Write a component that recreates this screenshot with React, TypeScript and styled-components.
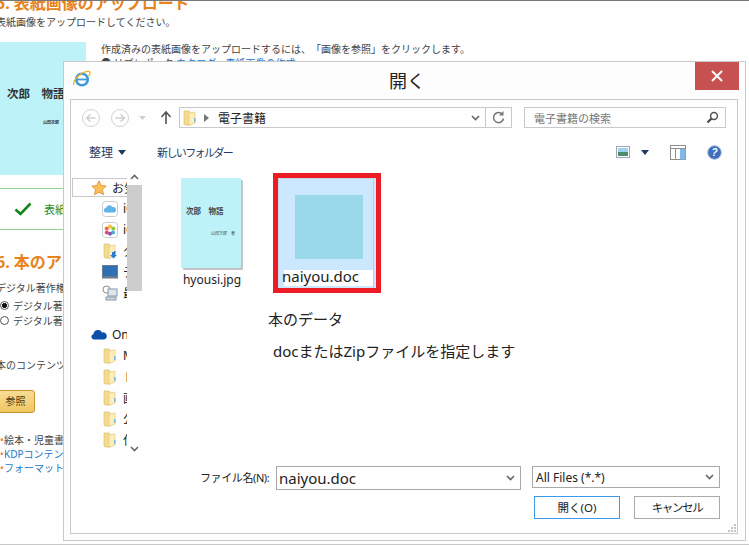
import React from "react";
import styled, { createGlobalStyle } from "styled-components";

const Global = createGlobalStyle`
  html, body { margin: 0; padding: 0; background: #fff; }
  body {
    font-family: "Noto Sans", "Noto Sans CJK JP", sans-serif;
    text-spacing-trim: space-all;
  }
`;

const Screen = styled.div`
  position: relative;
  width: 749px;
  height: 545px;
  overflow: hidden;
  background: #fefefe;
  border-top: 1px solid #777;
  box-sizing: border-box;
  &::after {
    content: "";
    position: absolute;
    left: 0; right: 0; bottom: 0;
    height: 1px;
    background: #c8c8c8;
  }
`;

const Page = styled.div`
  width: 520px;
  margin-left: -4px;
  margin-top: -8px;
  color: #444;
  font-size: 10px;
`;
const Heading = styled.h2<{ $gap?: number }>`
  margin: ${(p) => p.$gap ?? 0}px 0 0;
  font-size: 16px;
  line-height: 20px;
  font-weight: 700;
  color: #e8831c;
  white-space: nowrap;
`;
const Para = styled.p<{ $top?: number }>`
  margin: ${(p) => p.$top ?? 0}px 0 0;
  line-height: 14px;
  white-space: nowrap;
`;
const CoverRow = styled.div`
  display: flex;
  margin-top: 13px;
  margin-left: 4px;
`;
const Cover = styled.div`
  width: 86px;
  height: 133px;
  background: #bdf3f8;
  color: #333;
  font-family: "Liberation Serif", "Noto Sans CJK JP", serif;
  font-weight: 700;
  flex: none;
  box-sizing: border-box;
  padding: 45px 0 0 7px;
`;
const CoverTitle = styled.div`
  font-size: 11.5px;
  line-height: 14px;
  white-space: nowrap;
`;
const CoverAuthor = styled.div`
  margin: 19px 0 0 36px;
  font-size: 4px;
  line-height: 6px;
  white-space: nowrap;
`;
const CoverText = styled.div`
  margin-left: 15px;
`;
const Link = styled.span`
  color: #1b78c8;
`;
const Notice = styled.div`
  margin: 13px 0 0 4px;
  height: 42px;
  box-sizing: border-box;
  border: 1px solid #93d093;
  border-left: none;
  display: flex;
  align-items: center;
  padding-left: 14px;
  gap: 12px;
  color: #1d8a1d;
  font-size: 11px;
`;
const Radio = styled.label<{ $top?: number }>`
  display: flex;
  align-items: center;
  gap: 4px;
  height: 15px;
  margin: ${(p) => p.$top ?? 0}px 0 0 4px;
  white-space: nowrap;
`;
const RadioDot = styled.span<{ $on?: boolean }>`
  width: 9px;
  height: 9px;
  flex: none;
  box-sizing: border-box;
  border: 1px solid #555;
  border-radius: 50%;
  background: ${(p) => (p.$on ? "radial-gradient(circle, #111 0 2.2px, #fff 2.8px)" : "#fff")};
`;
const Browse = styled.div`
  margin: 18px 0 0 -6px;
  width: 45px;
  height: 23px;
  box-sizing: border-box;
  border: 1px solid #c9952d;
  border-radius: 3px;
  background: linear-gradient(#f8dc96, #f0c660);
  color: #4a3a10;
  font-size: 10px;
  line-height: 21px;
  text-align: center;
  padding-left: 6px;
`;
const LinkItem = styled.div<{ $top?: number }>`
  margin: ${(p) => p.$top ?? 0}px 0 0 4px;
  line-height: 14px;
  white-space: nowrap;
  font-size: 10px;
`;
const Bullet = styled.span`
  display: inline-block;
  width: 4px;
  color: #e8831c;
`;

const Dialog = styled.div`
  position: absolute;
  left: 63px;
  top: 60px;
  width: 683px;
  height: 480px;
  box-sizing: border-box;
  background: #fdfdfd;
  border: 1px solid #c9c9c9;
  display: flex;
  flex-direction: column;
  padding: 0 7px 6px 6px;
`;
const TitleBar = styled.div`
  height: 37px;
  flex: none;
  display: flex;
  align-items: center;
  position: relative;
  padding-left: 3px;
`;
const Title = styled.div`
  position: absolute;
  left: 0; right: 0;
  top: 5px;
  text-align: center;
  font-size: 18px;
  line-height: 28px;
  color: #222;
  padding-left: 6px;
`;
const Close = styled.div`
  position: absolute;
  right: -1px;
  top: 0;
  width: 44px;
  height: 28px;
  background: #c75050;
  display: flex;
  align-items: center;
  justify-content: center;
`;
const Panel = styled.div`
  flex: 1;
  min-height: 0;
  box-sizing: border-box;
  border: 1px solid #c9c9c9;
  background: #fefefe;
  display: flex;
  flex-direction: column;
`;
const AddressRow = styled.div`
  display: flex;
  align-items: center;
  height: 21px;
  margin-top: 7px;
  padding-left: 10px;
  flex: none;
`;
const NavGlyphs = styled.div`
  width: 98px;
  height: 21px;
  flex: none;
`;
const Address = styled.div`
  width: 333px;
  height: 21px;
  box-sizing: border-box;
  border: 1px solid #c9c9c9;
  display: flex;
  align-items: center;
  font-size: 12px;
  color: #222;
  flex: none;
`;
const Crumb = styled.div`
  flex: 1;
  display: flex;
  align-items: center;
  gap: 7px;
  padding-left: 3px;
`;
const CrumbText = styled.span`
  margin-left: 2px;
`;
const ChevSlot = styled.span`
  margin-right: 5px;
  display: flex;
`;
const AddressEnd = styled.div`
  width: 25px;
  height: 100%;
  border-left: 1px solid #c9c9c9;
  display: flex;
  align-items: center;
  justify-content: center;
`;
const Search = styled.div`
  margin-left: 12px;
  width: 202px;
  height: 21px;
  box-sizing: border-box;
  border: 1px solid #c9c9c9;
  display: flex;
  align-items: center;
  justify-content: space-between;
  padding: 0 6px 0 9px;
  font-size: 11px;
  color: #777;
`;
const Toolbar = styled.div`
  height: 44px;
  box-sizing: border-box;
  flex: none;
  display: flex;
  align-items: center;
  padding: 4px 15px 0 18px;
  font-size: 11px;
  color: #1e3a5f;
`;
const Organize = styled.span`
  display: flex;
  align-items: center;
  gap: 5px;
  font-size: 12px;
`;
const NewFolder = styled.span`
  margin-left: 31px;
  letter-spacing: -1.6px;
`;
const ToolIcons = styled.div`
  margin-left: auto;
  display: flex;
  align-items: center;
  svg + svg { margin-left: 21px; }
  svg:nth-child(2) { margin-left: 11px; }
`;
const Main = styled.div`
  flex: 1;
  min-height: 0;
  display: flex;
`;
const Nav = styled.div`
  width: 71px;
  flex: none;
  display: flex;
`;
const Tree = styled.div`
  width: 55px;
  margin-left: 1px;
  flex: none;
  overflow: hidden;
  padding-top: 6px;
`;
const TreeRow = styled.div<{ $indent?: number; $selected?: boolean; $top?: number }>`
  height: ${(p) => (p.$selected ? 19 : 21)}px;
  margin-top: ${(p) => p.$top ?? 0}px;
  margin-bottom: ${(p) => (p.$selected ? 1 : 0)}px;
  box-sizing: border-box;
  border: ${(p) => (p.$selected ? "1px solid #c9c9c9" : "none")};
  border-right: none;
  display: flex;
  align-items: center;
  gap: 5px;
  padding-left: ${(p) => p.$indent ?? 30}px;
  font-size: 12px;
  color: #222;
  white-space: nowrap;
  & > svg { flex: none; }
`;
const TreeIcon = styled.span`
  width: 16px;
  height: 16px;
  flex: none;
  display: flex;
  align-items: center;
  justify-content: center;
`;
const Scroll = styled.div`
  width: 15px;
  flex: none;
  display: flex;
  flex-direction: column;
  align-items: center;
  padding: 2px 0 8px;
  box-sizing: border-box;
`;
const Thumb = styled.div`
  width: 15px;
  height: 106px;
  background: #cdcdcd;
  margin-top: 5px;
`;
const ScrollSpacer = styled.div`
  flex: 1;
`;
const Files = styled.div`
  flex: 1;
  min-width: 0;
  padding: 1px 0 0 39px;
`;
const Tiles = styled.div`
  display: flex;
  align-items: flex-start;
`;
const Tile = styled.div`
  width: 62px;
  margin-top: 5px;
  text-align: center;
  font-size: 12px;
  color: #222;
`;
const Thumbnail = styled.div`
  width: 60px;
  height: 90px;
  background: #bdf3f8;
  box-shadow: 2px 2px 0 #c4c4c4;
  box-sizing: border-box;
  padding: 30px 0 0 5px;
  text-align: left;
  border-radius: 1px;
  color: #444;
  font-family: "Liberation Serif", "Noto Sans CJK JP", serif;
  font-weight: 700;
`;
const ThumbTitle = styled.div`
  font-size: 7.5px;
  line-height: 8px;
  white-space: nowrap;
`;
const ThumbAuthor = styled.div`
  font-size: 4px;
  line-height: 5px;
  margin: 15px 0 0 25px;
  white-space: nowrap;
  font-weight: 400;
`;
const TileName = styled.div`
  margin-top: 4px;
  line-height: 16px;
  width: 62px;
  white-space: nowrap;
`;
const Picked = styled.div`
  margin-left: 30px;
  width: 108px;
  height: 120px;
  box-sizing: border-box;
  border: 5px solid #ed1c24;
  background: linear-gradient(#b5cfe3, #b5cfe3) right 2px top / 1px 100% no-repeat, #cce8ff;
  display: flex;
  flex-direction: column;
  align-items: center;
  box-shadow: inset 1px 1px 0 #c2d8e8;
`;
const PickedSquare = styled.div`
  width: 68px;
  height: 64px;
  background: #99d9ea;
  margin-top: 17px;
  margin-left: 4px;
  flex: none;
`;
const PickedName = styled.div`
  width: 89px;
  height: 16px;
  margin-top: 11px;
  margin-left: 3px;
  flex: none;
  background: #fff;
  font-size: 15px;
  line-height: 13px;
  color: #222;
  white-space: nowrap;
  text-indent: -2px;
`;
const Caption = styled.div`
  margin: 16px 0 0 87px;
  font-size: 15px;
  line-height: 20px;
  color: #222;
  white-space: nowrap;
`;
const Hint = styled.div`
  margin: 12px 0 0 92px;
  font-size: 15px;
  line-height: 20px;
  color: #222;
  white-space: nowrap;
`;
const Footer = styled.div`
  flex: none;
  height: 73px;
  position: relative;
  padding: 6px 17px 0 129px;
  box-sizing: border-box;
`;
const NameRow = styled.div`
  display: flex;
  align-items: flex-start;
`;
const NameLabel = styled.div`
  width: 76px;
  font-size: 11px;
  letter-spacing: -0.4px;
  line-height: 24px;
  color: #222;
  flex: none;
  white-space: nowrap;
`;
const Combo = styled.div<{ $w: number; $h: number; $size: number }>`
  width: ${(p) => p.$w}px;
  height: ${(p) => p.$h}px;
  flex: none;
  box-sizing: border-box;
  border: 1px solid #a9a9a9;
  display: flex;
  align-items: center;
  justify-content: space-between;
  padding: 0 5px 0 ${(p) => (p.$size > 13 ? 2 : 3)}px;
  font-size: ${(p) => p.$size}px;
  color: #222;
`;
const ComboGap = styled.div`
  width: 11px;
  flex: none;
`;
const Buttons = styled.div`
  display: flex;
  justify-content: flex-end;
  gap: 14px;
  margin-top: 6px;
`;
const Btn = styled.div<{ $primary?: boolean; $tight?: boolean }>`
  width: 86px;
  height: 23px;
  box-sizing: border-box;
  border: 1px solid ${(p) => (p.$primary ? "#3c9aea" : "#ababab")};
  text-align: center;
  font-size: 11.5px;
  letter-spacing: ${(p) => (p.$tight ? "-1.4px" : "0")};
  line-height: 21px;
  color: #222;
`;
const Grip = styled.svg`
  position: absolute;
  right: 1px;
  bottom: 1px;
`;
const IeIcon = styled.svg`
  margin-top: -3px;
`;

const Folder = ({ blue }: { blue?: boolean }) => (
  <svg width="14" height="16" viewBox="0 0 14 16">
    <path d="M1 1h5l1 1v13H2l-1-1z" fill="#f4dc8e" stroke="#d9b95e" strokeWidth=".6" />
    <path d="M6 3l6-1v11l-6 2.5z" fill="#fbeebc" stroke="#e0c36f" strokeWidth=".6" />
    <rect x="11" y="8" width="1.5" height="4" fill={blue ? "#2a7fd0" : "#7fb7d8"} />
    {blue && <path d="M9 9h3v3h2l-3.5 3.5L7 12h2z" fill="#2a7fd0" />}
  </svg>
);

const Chev = ({ up, color = "#666" }: { up?: boolean; color?: string }) => (
  <svg width="9" height="6" viewBox="0 0 9 6">
    <path d={up ? "M1 5l3.5-3.5L8 5" : "M1 1l3.5 3.5L8 1"} fill="none" stroke={color} strokeWidth="1.6" />
  </svg>
);

const Circle = ({ flip }: { flip?: boolean }) => (
  <g transform={flip ? "translate(20,0) scale(-1,1)" : undefined}>
    <circle cx="10" cy="10" r="8.5" fill="#fff" stroke="#d2d2d2" />
    <path d="M14.5 10H6M9.5 6.2L5.6 10l3.9 3.8" fill="none" stroke="#cfcfcf" strokeWidth="1.4" />
  </g>
);

export default function App() {
  return (
    <Screen>
      <Global />
      <Page>
        <Heading>5. 表紙画像のアップロード</Heading>
        <Para $top={2}>表紙画像をアップロードしてください。</Para>
        <CoverRow>
          <Cover>
            <CoverTitle>次郎　物語</CoverTitle>
            <CoverAuthor>山田次郎　著</CoverAuthor>
          </Cover>
          <CoverText>
            <Para>作成済みの表紙画像をアップロードするには、「画像を参照」をクリックします。</Para>
            <Para>● リブレポック <Link>カタログ、表紙画像の作成</Link></Para>
          </CoverText>
        </CoverRow>
        <Notice>
          <svg width="18" height="14" viewBox="0 0 18 14">
            <path d="M1.5 7.5l5 4.5L16.5 1.5" fill="none" stroke="#14851a" strokeWidth="2.6" />
          </svg>
          <span>表紙画像</span>
        </Notice>
        <Heading $gap={22}>6. 本のアップロード</Heading>
        <Para $top={9}>デジタル著作権管理</Para>
        <Radio $top={3}><RadioDot $on />デジタル著作権</Radio>
        <Radio><RadioDot />デジタル著作権</Radio>
        <Para $top={30}>本のコンテンツをアップロード</Para>
        <Browse>参照</Browse>
        <LinkItem $top={20}><Bullet>•</Bullet>絵本・児童書</LinkItem>
        <LinkItem><Bullet>•</Bullet><Link>KDPコンテンツ</Link></LinkItem>
        <LinkItem><Bullet>•</Bullet><Link>フォーマット</Link></LinkItem>
      </Page>

      <Dialog>
        <TitleBar>
          <IeIcon width="18" height="18" viewBox="0 0 18 18">
            <circle cx="9" cy="9.5" r="5.8" fill="none" stroke="#3d9ad8" strokeWidth="2.6" />
            <path d="M4 9.5h10" stroke="#3d9ad8" strokeWidth="1.8" />
            <path d="M1 15C-1 10 9 1 16 1.5c2 .5 1 3-.5 4.5" fill="none" stroke="#eeb52f" strokeWidth="1.3" />
          </IeIcon>
          <Title>開く</Title>
          <Close>
            <svg width="12" height="12" viewBox="0 0 12 12">
              <path d="M1 1l10 10M11 1L1 11" stroke="#fff" strokeWidth="2" />
            </svg>
          </Close>
        </TitleBar>
        <Panel>
          <AddressRow>
            <NavGlyphs>
              <svg width="98" height="21" viewBox="0 0 98 21">
                <g transform="translate(0,1)"><Circle /></g>
                <g transform="translate(29,1)"><Circle flip /></g>
                <path d="M58 9h7l-3.5 4z" fill="#cfcfcf" />
                <path d="M85 17V6M80.5 10L85 5l4.5 5" fill="none" stroke="#555" strokeWidth="1.6" />
              </svg>
            </NavGlyphs>
            <Address>
              <Crumb>
                <Folder />
                <svg width="5" height="8" viewBox="0 0 5 8"><path d="M0 0l5 4-5 4z" fill="#777" /></svg>
                <CrumbText>電子書籍</CrumbText>
              </Crumb>
              <ChevSlot><Chev /></ChevSlot>
              <AddressEnd>
                <svg width="13" height="13" viewBox="0 0 13 13">
                  <path d="M10.5 3.5a5 5 0 1 0 1 4" fill="none" stroke="#777" strokeWidth="1.5" />
                  <path d="M11.5 0v4.5H7z" fill="#777" />
                </svg>
              </AddressEnd>
            </Address>
            <Search>
              <span>電子書籍の検索</span>
              <svg width="13" height="13" viewBox="0 0 13 13">
                <circle cx="8" cy="5" r="3.4" fill="none" stroke="#555" strokeWidth="1.5" />
                <path d="M5.5 7.5L1.5 11.5" stroke="#444" strokeWidth="2.2" />
              </svg>
            </Search>
          </AddressRow>
          <Toolbar>
            <Organize>
              整理
              <svg width="8" height="5" viewBox="0 0 8 5"><path d="M0 0h8L4 5z" fill="#1e3a5f" /></svg>
            </Organize>
            <NewFolder>新しいフォルダー</NewFolder>
            <ToolIcons>
              <svg width="14" height="12" viewBox="0 0 14 12">
                <rect x=".5" y=".5" width="13" height="11" fill="#fff" stroke="#9aa7b0" />
                <rect x="2" y="2" width="10" height="4" fill="#9fd0ee" />
                <rect x="2" y="6" width="10" height="4" fill="#4f8a6a" />
              </svg>
              <svg width="8" height="5" viewBox="0 0 8 5"><path d="M0 0h8L4 5z" fill="#1e3a5f" /></svg>
              <svg width="16" height="15" viewBox="0 0 16 15">
                <rect x=".5" y=".5" width="15" height="14" fill="#fff" stroke="#8f8f8f" />
                <path d="M.5 3.5h15M5.5 3.5v11" stroke="#8f8f8f" />
                <rect x="10" y="4" width="5.5" height="10.5" fill="#7db9ea" />
              </svg>
              <svg width="15" height="15" viewBox="0 0 15 15">
                <circle cx="7.5" cy="7.5" r="6.8" fill="#3b6fc0" stroke="#a6b8d6" />
                <text x="7.5" y="11" textAnchor="middle" fontSize="10" fontWeight="700" fontStyle="italic" fill="#fff" fontFamily="Liberation Sans">?</text>
              </svg>
            </ToolIcons>
          </Toolbar>
          <Main>
            <Nav>
              <Tree>
                <TreeRow $indent={18} $selected>
                  <svg width="16" height="16" viewBox="0 0 16 16">
                    <path d="M8 .8l2.2 4.7 5 .6-3.7 3.5 1 5.1L8 12.2l-4.5 2.5 1-5.1L.8 6.1l5-.6z" fill="#fbbf5a" stroke="#d98c2a" strokeWidth=".8" />
                  </svg>
                  お気に入り
                </TreeRow>
                <TreeRow>
                  <TreeIcon>
                    <svg width="16" height="16" viewBox="0 0 16 16">
                      <rect x=".5" y=".5" width="15" height="15" rx="3" fill="#fff" stroke="#ccc" />
                      <path d="M4 11.5a2.2 2.2 0 0 1 0-4.4 3.4 3.4 0 0 1 6.4-1 2.7 2.7 0 0 1 1.6 5.4z" fill="#5fb4ea" />
                    </svg>
                  </TreeIcon>
                  iCloud
                </TreeRow>
                <TreeRow>
                  <TreeIcon>
                    <svg width="16" height="16" viewBox="0 0 16 16">
                      <rect x=".5" y=".5" width="15" height="15" rx="3" fill="#fff" stroke="#ccc" />
                      <circle cx="8" cy="4.5" r="2" fill="#f5c33b" />
                      <circle cx="11.3" cy="6.5" r="2" fill="#8cc63f" />
                      <circle cx="11" cy="10.5" r="2" fill="#4aa8d8" />
                      <circle cx="8" cy="11.8" r="2" fill="#7a5bb5" />
                      <circle cx="4.8" cy="10.5" r="2" fill="#d9457f" />
                      <circle cx="4.7" cy="6.5" r="2" fill="#ef6b3a" />
                    </svg>
                  </TreeIcon>
                  iCloud
                </TreeRow>
                <TreeRow>
                  <TreeIcon><Folder blue /></TreeIcon>
                  ダウンロード
                </TreeRow>
                <TreeRow>
                  <TreeIcon>
                    <svg width="16" height="14" viewBox="0 0 16 14">
                      <rect x=".5" y=".5" width="15" height="11" fill="#2f6fb5" stroke="#6b7b8a" />
                      <rect x="0" y="11" width="16" height="2.5" fill="#6b7b8a" />
                    </svg>
                  </TreeIcon>
                  デスクトップ
                </TreeRow>
                <TreeRow>
                  <TreeIcon>
                    <svg width="16" height="16" viewBox="0 0 16 16">
                      <circle cx="4.5" cy="4.5" r="3.5" fill="#fff" stroke="#888" />
                      <rect x="6" y="4" width="9" height="7" fill="#dfe6ea" stroke="#89a" />
                      <rect x="4" y="12" width="10" height="3" fill="#cfd6da" stroke="#89a" />
                    </svg>
                  </TreeIcon>
                  最近
                </TreeRow>
                <TreeRow $indent={19} $top={21}>
                  <svg width="16" height="11" viewBox="0 0 16 11">
                    <path d="M3 10.5a2.8 2.8 0 0 1-.5-5.5 4.6 4.6 0 0 1 8.6-1.6A3.6 3.6 0 0 1 13 10.5z" fill="#0b4fa8" />
                  </svg>
                  OneDrive
                </TreeRow>
                <TreeRow><TreeIcon><Folder /></TreeIcon>Music</TreeRow>
                <TreeRow><TreeIcon><Folder /></TreeIcon>ドキュメント</TreeRow>
                <TreeRow><TreeIcon><Folder /></TreeIcon>画像</TreeRow>
                <TreeRow><TreeIcon><Folder /></TreeIcon>公開</TreeRow>
                <TreeRow><TreeIcon><Folder /></TreeIcon>仕事</TreeRow>
              </Tree>
              <Scroll>
                <Chev up />
                <Thumb />
                <ScrollSpacer />
                <Chev />
              </Scroll>
            </Nav>
            <Files>
              <Tiles>
                <Tile>
                  <Thumbnail>
                    <ThumbTitle>次郎　物語</ThumbTitle>
                    <ThumbAuthor>山田次郎　著</ThumbAuthor>
                  </Thumbnail>
                  <TileName>hyousi.jpg</TileName>
                </Tile>
                <Picked>
                  <PickedSquare />
                  <PickedName>naiyou.doc</PickedName>
                </Picked>
              </Tiles>
              <Caption>本のデータ</Caption>
              <Hint>docまたはZipファイルを指定します</Hint>
            </Files>
          </Main>
          <Footer>
            <NameRow>
              <NameLabel>ファイル名(N):</NameLabel>
              <Combo $w={245} $h={24} $size={15}>naiyou.doc<Chev /></Combo>
              <ComboGap />
              <Combo $w={188} $h={22} $size={12}>All Files (*.*)<Chev /></Combo>
            </NameRow>
            <Buttons>
              <Btn $primary>開く(O)</Btn>
              <Btn $tight>キャンセル</Btn>
            </Buttons>
            <Grip width="10" height="10" viewBox="0 0 10 10">
              <path d="M8 2h2v2H8zM5 5h2v2H5zM8 5h2v2H8zM2 8h2v2H2zM5 8h2v2H5zM8 8h2v2H8z" fill="#c4c4c4" />
            </Grip>
          </Footer>
        </Panel>
      </Dialog>
    </Screen>
  );
}
